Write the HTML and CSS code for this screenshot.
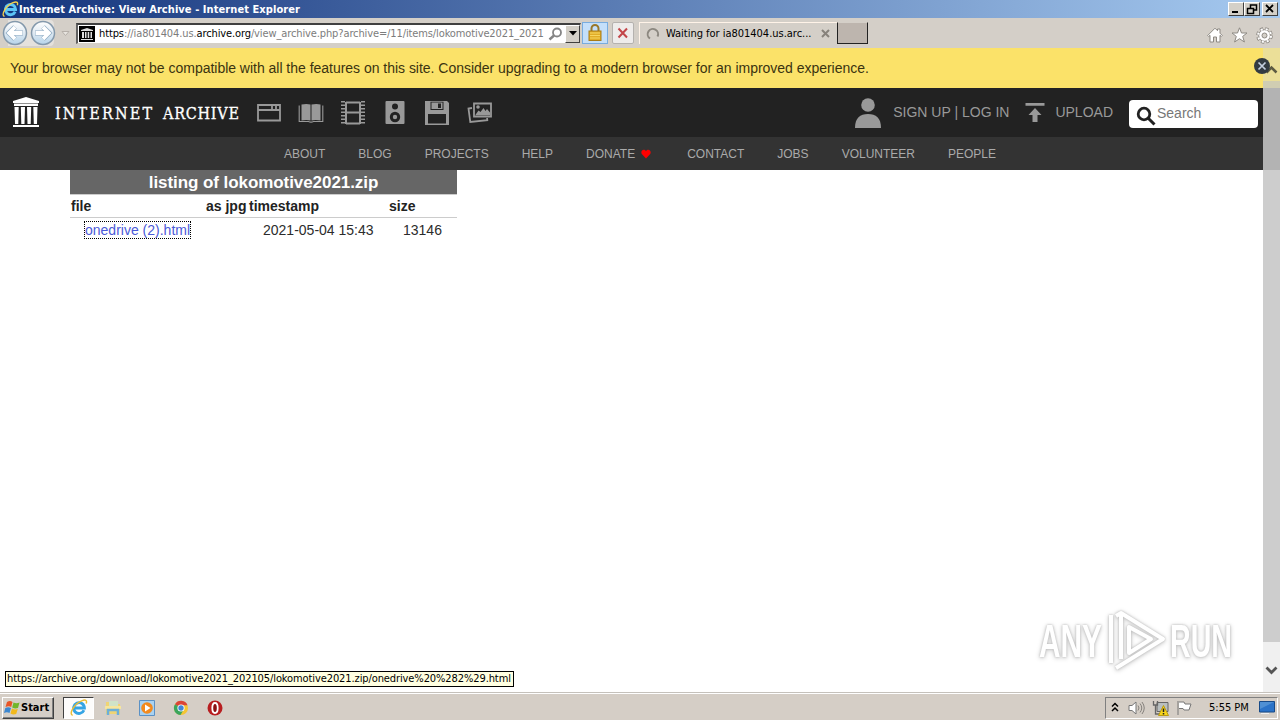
FILE: index.html
```html
<!DOCTYPE html>
<html lang="en">
  <head>
    <meta charset="UTF-8" />
    <title>Internet Archive: View Archive</title>
    <link rel="stylesheet" href="styles.css">
  </head>
  <body>
    <div class="titlebar">
      <svg class="ie" width="17" height="17" viewBox="0 0 20 20">
        <path d="M15.5 12.5A6 6 0 1 1 16 10H5" fill="none" stroke="#5cc4f5" stroke-width="3.4" />
        <path d="M3 18C-2 17 5 5 13 2c5-2 6 0 5 3" fill="none" stroke="#f5cf4c" stroke-width="1.6" />
      </svg>
      <span class="title">Internet Archive: View Archive - Internet Explorer</span>
      <div class="win-btns">
        <span class="win-btn"><svg width="15" height="12"><path d="M3 9h6" stroke="#000" stroke-width="2" /></svg></span>
        <span class="win-btn"><svg width="15" height="12"><path d="M5.500 5V2h6v5H9M5 2h7M2.500 5.500h6v5h-6zM2 5.500h7" fill="none" stroke="#000" stroke-width="1.500" /></svg></span>
        <span class="win-btn close"><svg width="14" height="12"><path d="M3 2l7 7M10 2l-7 7" stroke="#000" stroke-width="1.800" /></svg></span>
      </div>
    </div>

    <div class="toolbar">
      <svg class="arrows" width="75" height="30" viewBox="0 0 75 30">
        <defs>
          <linearGradient id="orb" x2="0" y2="1">
            <stop offset="0" stop-color="#fff" />
            <stop offset=".5" stop-color="#dfe9f2" />
            <stop offset="1" stop-color="#b5d4ea" />
          </linearGradient>
        </defs>
        <path d="M8 2h42q4 0 4 5v16q0 5-4 5H8z" fill="#e4e1dd" />
        <circle cx="15" cy="15" r="11.500" fill="url(#orb)" stroke="#8499ac" stroke-width="1.500" />
        <circle cx="43" cy="15" r="11.500" fill="url(#orb)" stroke="#8499ac" stroke-width="1.500" />
        <path d="M23 15H9M15 9l-6 6 6 6M35 15h14M43 9l6 6-6 6" fill="none" stroke="#8daac2" stroke-width="5" />
        <path d="M22.500 15H9.500M15 9.200L9.200 15l5.800 5.800M35.500 15h13M43 9.200l5.800 5.800-5.800 5.800" fill="none" stroke="#fff" stroke-width="3.800" />
        <path d="M62 13.500h7l-3.500 4z" fill="#e8e5e0" stroke="#b6b0aa" />
      </svg>
      <div class="address">
        <svg class="favicon" width="16" height="16" viewBox="0 0 16 16">
          <path d="M0 0h16v16H0z" fill="#000" />
          <path d="M2 4l6-2 6 2v1H2zM2 13h12v1H2zM3 6h2v6H3zM6 6h1.500v6H6zM8.700 6h1.500v6H8.700zM11.500 6H13v6h-1.500z" fill="#ddd" />
        </svg>
        <span class="url"><b>https</b>://ia801404.us.<b>archive.org</b>/view_archive.php?archive=/11/items/lokomotive2021_2021</span>
        <svg class="find" width="15" height="14" viewBox="0 0 15 14">
          <circle cx="9" cy="5.500" r="4" fill="#fff" stroke="#858585" stroke-width="1.800" />
          <path d="M6 8.500L1.500 12.500" stroke="#858585" stroke-width="2.500" />
        </svg>
        <span class="drop"><svg width="8" height="5"><path d="M0 0h8L4 4.500z" fill="#000" /></svg></span>
      </div>
      <div class="lock">
        <svg width="16" height="18" viewBox="0 0 16 18">
          <path d="M4.500 8V4.500a3.500 3.500 0 0 1 7 0V8" fill="none" stroke="#99772a" stroke-width="2" />
          <rect x="2" y="7" width="12" height="9.500" fill="#e1ac27" stroke="#a77b17" />
          <path d="M3 9h10M3 11.500h10M3 14h10" stroke="#f6d560" />
        </svg>
      </div>
      <div class="stop">
        <svg width="12" height="12"><path d="M1.500 1.500l8.500 9M10 1.500l-8.500 9" stroke="#c3464a" stroke-width="2" /></svg>
      </div>
      <div class="tab">
        <svg width="14" height="14" viewBox="0 0 14 14">
          <path d="M4 11.500A5.200 5.200 0 1 1 11.500 9.500" fill="none" stroke="#8c8880" stroke-width="2" />
        </svg>
        <span class="tab-title">Waiting for ia801404.us.arc...</span>
        <svg width="9" height="9"><path d="M1 1l7 7M8 1L1 8" stroke="#87827b" stroke-width="2" /></svg>
      </div>
      <div class="new-tab"></div>
      <div class="tools">
        <svg width="16" height="16" viewBox="0 0 16 16"><path d="M.7 8.500L8 1.200l2.500 2.500V2H13v4.200l2.300 2.300-1 1L13 8.300V15H9.500v-5h-3v5H3V8.300l-1.300 1.200z" fill="#fff" stroke="#8d8983" /></svg>
        <svg width="17" height="16" viewBox="0 0 17 16"><path d="M8.500.8l2 5.200H16l-4.300 3.400 1.700 5.600-4.900-3.300L3.600 15l1.700-5.600L1 6h5.500z" fill="#fff" stroke="#8d8983" /></svg>
        <svg width="17" height="17" viewBox="0 0 17 17">
          <circle cx="8.500" cy="8.500" r="6.500" fill="none" stroke="#8d8983" stroke-width="3.600" stroke-dasharray="3 2.100" />
          <circle cx="8.500" cy="8.500" r="5.800" fill="#fff" stroke="#8d8983" />
          <circle cx="8.500" cy="8.500" r="6.500" fill="none" stroke="#fff" stroke-width="2" stroke-dasharray="2 3.100" stroke-dashoffset="-.5" />
          <circle cx="8.500" cy="8.500" r="2.500" fill="#d4d0c8" stroke="#8d8983" />
        </svg>
      </div>
    </div>

    <div class="viewport">
      <div class="banner">Your browser may not be compatible with all the features on this site. Consider upgrading to a modern browser for an improved experience.
        <svg class="dismiss" width="18" height="18" viewBox="0 0 18 18">
          <circle cx="9" cy="9" r="8" fill="#333b42" />
          <path d="M5.500 5.500l7 7M12.500 5.500l-7 7" stroke="#c4cfdf" stroke-width="1.700" />
        </svg>
      </div>

      <div class="topnav">
        <svg class="temple" width="28" height="32" viewBox="0 0 28 32">
          <path d="M14 0l13 4v2H1V4zM2 6.500h24V9H2zM1 28h26v2H1zM2.500 10h4.200l-.4 17H3zM8.800 10H13l-.5 17H9.300zM15 10h4.200l-.5 17h-3.200zM21.300 10h4.200l-.5 17h-3.200z" fill="#fff" />
        </svg>
        <svg class="wordmark" width="186" height="22">
          <text x="0" y="17" textLength="97">INTERNET</text>
          <text x="108" y="17" textLength="76">ARCHIVE</text>
        </svg>
        <div class="media">
          <svg width="26" height="26" viewBox="0 0 26 26"><path d="M2 5h22v15.500H2zM2 10h22M16 5v4M20 5v4" fill="none" stroke="#999" stroke-width="1.800" /></svg>
          <svg width="26" height="26" viewBox="0 0 26 26"><path d="M3.500 4.500q5-1 9 0v16q-4-1.200-9 0zM13.500 4.500q5-1 9 0v16q-5-1.200-9 0z" fill="#999" /><path d="M1.200 5.500v16h9.300q2.500 1.200 5 0h9.300v-16" fill="none" stroke="#999" stroke-width="1.100" /></svg>
          <svg width="26" height="26" viewBox="0 0 26 26"><path d="M6 2v22M20 2v22M6 2.500h14M6 12.500h14M6 23.500h14" stroke="#999" stroke-width="2" /><path d="M3 1v24M23 1v24" stroke="#999" stroke-width="4" stroke-dasharray="1.500 2" /></svg>
          <svg width="26" height="26" viewBox="0 0 26 26"><rect x="3.500" y="1" width="19" height="23" rx="1" fill="#999" /><circle cx="13" cy="6.500" r="3" fill="#222" /><circle cx="13" cy="17" r="5.200" fill="#222" /><circle cx="13" cy="17" r="2.200" fill="#999" /></svg>
          <svg width="26" height="26" viewBox="0 0 26 26"><path d="M1 1h22l2 2v22H1z" fill="#999" /><path d="M6.500 1.800h13V10h-13zM4 14h18v9.500H4z" fill="#222" /><path d="M7.500 2.500h11v6.500h-11z" fill="#999" /><path d="M14 3.500h3v4.500h-3z" fill="#222" /></svg>
          <svg width="26" height="26" viewBox="0 0 26 26"><path d="M8 3.500h17v13.200H8z" fill="none" stroke="#999" stroke-width="1.800" /><path d="M6 8l-3.500.6L4.300 22l17-1.800-.2-2.200" fill="none" stroke="#999" stroke-width="1.800" /><path d="M9 15.500l3.500-5 2 1.500 3-4 2 3 1.500-2 3 3.500v3z" fill="#999" /><circle cx="12" cy="7" r="1.800" fill="#999" /></svg>
        </div>
        <svg class="user" width="28" height="32" viewBox="0 0 28 32"><circle cx="14" cy="8" r="6.800" fill="#999" /><path d="M1 31C1 21 6 17 14 17s13 4 13 14z" fill="#999" /></svg>
        <span class="login">SIGN UP | LOG IN</span>
        <svg class="up" width="20" height="20" viewBox="0 0 20 20"><path d="M.5 0h19v2.700H.5zM10 5l6.500 7H12.500v7h-5v-7h-4z" fill="#999" /></svg>
        <span class="upload">UPLOAD</span>
        <div class="search">
          <svg width="20" height="20" viewBox="0 0 20 20"><circle cx="8" cy="8" r="5.800" fill="none" stroke="#222" stroke-width="2.800" /><path d="M12 12l6.500 6.500" stroke="#222" stroke-width="3" /></svg>
          <span>Search</span>
        </div>
      </div>

      <div class="subnav">
        <span>ABOUT</span>
        <span>BLOG</span>
        <span>PROJECTS</span>
        <span>HELP</span>
        <span class="donate">DONATE <svg width="10" height="10" viewBox="0 0 10 10"><path d="M5 9.500L.8 5C-1 2 3-1 5 2.300 7-1 11 2 9.200 5z" fill="#f00" /></svg></span>
        <span>CONTACT</span>
        <span>JOBS</span>
        <span>VOLUNTEER</span>
        <span>PEOPLE</span>
      </div>

      <table class="archive">
        <caption>listing of lokomotive2021.zip</caption>
        <tr><th class="c-file">file</th><th class="c-jpg">as jpg</th><th class="c-time">timestamp</th><th class="c-size">size</th></tr>
        <tr><td><a href="#">onedrive (2).html</a></td><td></td><td>2021-05-04 15:43</td><td>13146</td></tr>
      </table>

      <div class="scrollbar">
        <svg class="s-up" width="17" height="33" viewBox="0 0 17 33"><path d="M3.500 24.500l5-5 5 5" fill="none" stroke="#5d5b42" stroke-width="2.500" /></svg>
        <div class="thumb"></div>
        <svg class="s-down" width="17" height="50" viewBox="0 0 17 50"><path d="M3.500 25.500l5 5 5-5" fill="none" stroke="#555" stroke-width="2.800" /></svg>
      </div>
      <div class="status">https://archive.org/download/lokomotive2021_202105/lokomotive2021.zip/onedrive%20%282%29.html</div>
      <svg class="watermark" width="224" height="80" viewBox="0 0 224 80">
        <g class="wm-text">
          <text x="8" y="57" textLength="63" lengthAdjust="spacingAndGlyphs">ANY</text>
          <text x="139" y="57" textLength="62" lengthAdjust="spacingAndGlyphs">RUN</text>
        </g>
        <path d="M80 15v48M90 59V13l42 26-42 26-5 3M98 27v26l22-14zM90 13l-5 3" fill="none" stroke="#fff" stroke-width="4" stroke-linejoin="round" />
      </svg>
    </div>

    <div class="taskbar">
      <div class="start">
        <svg width="17" height="16" viewBox="0 0 17 16">
          <path d="M3 2q3-2 5.500 0L7.200 7Q5 5.500 1.500 7z" fill="#e85526" />
          <path d="M9.500 2.500q3 1.500 6 0L14 8q-3 1-5.800-.5z" fill="#72b62b" />
          <path d="M1.300 8q3-1.500 5.700 0l-1.500 5Q3 11.500 0 13z" fill="#3c87d0" />
          <path d="M8 8.500q3 1.500 5.800.5l-1.600 5q-3 1.200-5.700-.5z" fill="#f2b91c" />
        </svg>
        <span>Start</span>
      </div>
      <div class="task-active">
        <svg width="18" height="18" viewBox="0 0 20 20">
          <path d="M15.500 12.500A6 6 0 1 1 16 10H5" fill="none" stroke="#35a4e4" stroke-width="3.200" />
          <path d="M3 18C-2 17 5 5 13 2c5-2 6 0 5 3" fill="none" stroke="#ebbd35" stroke-width="1.600" />
        </svg>
      </div>
      <div class="quick">
        <svg width="18" height="18" viewBox="0 0 18 18"><path d="M2 3h6l1 2h7v10H2z" fill="#efd474" /><path d="M5 2h9v5H5z" fill="#cfe3c8" /><path d="M1 7h16v3H1z" fill="#f7e69c" /><path d="M4 16v-5h10v5" fill="none" stroke="#6cafd9" stroke-width="2.500" /></svg>
        <svg width="18" height="18" viewBox="0 0 18 18"><path d="M1.500 1.500h15v15h-15z" fill="#a9d2f1" stroke="#5b91c5" /><circle cx="9" cy="9" r="5.800" fill="#f38a1d" /><path d="M7 5.500l5.500 3.500L7 12.500z" fill="#fff" /></svg>
        <svg width="18" height="18" viewBox="0 0 18 18"><circle cx="9" cy="9" r="7" fill="#f4c534" /><path d="M9 9L3 5.200a7 7 0 0 1 12.500 1H9z" fill="#db4437" /><path d="M9 9l-6-3.800A7 7 0 0 0 8.500 16l3-5z" fill="#3ba55c" /><circle cx="9" cy="9" r="3.600" fill="#fff" /><circle cx="9" cy="9" r="2.700" fill="#4285d6" /></svg>
        <svg width="18" height="18" viewBox="0 0 18 18"><circle cx="9" cy="9" r="7.500" fill="#b81e20" /><ellipse cx="9" cy="9" rx="2.700" ry="5" fill="#8b1012" stroke="#fff" stroke-width="1.800" /></svg>
      </div>
      <div class="tray">
        <svg width="8" height="12" viewBox="0 0 8 12"><path d="M1 4.500l3-3 3 3M1 9l3-3 3 3" fill="none" stroke="#000" stroke-width="1.500" /></svg>
        <svg class="t-sound" width="17" height="16" viewBox="0 0 17 16"><path d="M1 5.500h3L8 2v12l-4-3.500H1z" fill="#fff" stroke="#777" /><path d="M10 5.500q2 2.500 0 5M12 3.500q3.500 4.500 0 9M14 2q4.500 6 0 12" fill="none" stroke="#85817c" /></svg>
        <svg class="t-net" width="17" height="16" viewBox="0 0 17 16"><path d="M5 2.500h11v9H5z" fill="#b9bfc0" stroke="#666" /><path d="M1.500 1v4h4V1M3.500 5v9h6" fill="none" stroke="#666" stroke-width="1.300" /><path d="M11.500 5.500l5 10h-10z" fill="#f8d51b" stroke="#b99a13" /><path d="M11.500 8.500v3.500M11.500 13v1.500" stroke="#222" stroke-width="1.500" /></svg>
        <svg class="t-flag" width="17" height="16" viewBox="0 0 17 16"><path d="M2 1v14M3 2h5l1 2h6l-2 6H8L7 8.500H3" fill="#fff" stroke="#777" /></svg>
        <span class="clock">5:55 PM</span>
        <svg class="t-desk" width="16" height="14" viewBox="0 0 16 14"><path d="M.5.500h15V11H.5z" fill="#2b73c8" stroke="#174a88" /><path d="M1 1h14L1 8z" fill="#4f90d4" /><path d="M2 12.500h8" stroke="#f0f0f0" /></svg>
      </div>
    </div>
  </body>
</html>
```
FILE: styles.css
```css
* {
  box-sizing: border-box;
}
body {
  margin: 0;
  width: 1280px;
  height: 720px;
  overflow: hidden;
  display: flex;
  flex-direction: column;
  background: #fff;
  font-family: "Liberation Sans", Arial, sans-serif;
}
svg {
  display: block;
  flex: none;
}
.titlebar,
.toolbar,
.status,
.taskbar {
  font-family: "DejaVu Sans Condensed", "DejaVu Sans", sans-serif;
  font-stretch: condensed;
  font-size: 11px;
  color: #000;
  white-space: nowrap;
}

/* window frame */
.titlebar {
  height: 18px;
  flex: none;
  display: flex;
  align-items: center;
  padding: 0 2px;
  background: linear-gradient(90deg, #14347c, #a6caf0);
}
.title {
  color: #fff;
  font-weight: bold;
  letter-spacing: 0.07px;
}
.win-btns {
  margin-left: auto;
  display: flex;
}
.win-btn {
  width: 16px;
  height: 14px;
  background: #d4d0c8;
  border: 1px solid;
  border-color: #fff #404040 #404040 #fff;
}
.close {
  margin-left: 2px;
}
.toolbar {
  height: 30px;
  flex: none;
  display: flex;
  align-items: center;
  background: #d4cfc8;
}
.address {
  width: 505px;
  height: 21px;
  margin-left: 1px;
  display: flex;
  align-items: center;
  background: #fff;
  border: 1px solid #d4d0c8;
  border-top: 2px solid #404040;
  border-left: 2px solid #606060;
}
.favicon {
  margin: 0 4px 0 1px;
}
.url {
  width: 449px;
  flex: none;
  letter-spacing: -0.115px;
  color: #7c7c7c;
}
.url b {
  font-weight: normal;
  color: #000;
}
.drop {
  width: 15px;
  height: 18px;
  margin-left: auto;
  display: flex;
  align-items: center;
  justify-content: center;
  background: #d4d0c8;
  border: 1px solid;
  border-color: #fff #404040 #404040 #fff;
}
.lock,
.stop {
  height: 22px;
  display: flex;
  align-items: center;
  justify-content: center;
}
.lock {
  width: 26px;
  margin-left: 1px;
  background: #c4dffa;
  border: 1px solid #78acdf;
}
.stop {
  width: 22px;
  margin-left: 4px;
  background: #eeeceb;
  border: 1px solid #b5b2af;
  border-radius: 2px;
}
.tab {
  width: 198px;
  height: 22px;
  margin-left: 5px;
  padding: 0 7px 0 6px;
  display: flex;
  align-items: center;
  border-top: 1px solid #fff3e8;
  border-left: 1px solid #fff3e8;
}
.tab-title {
  width: 155px;
  margin-left: 6px;
  letter-spacing: -0.02px;
}
.new-tab {
  width: 31px;
  height: 22px;
  background: #bdb5ae;
  border: 1px solid #222;
  border-top-color: #d4cfc8;
}
.tools {
  margin: 4px 7px 0 auto;
  display: flex;
  gap: 8px;
}

/* page */
.viewport {
  position: relative;
  flex: 1;
}
.banner {
  position: relative;
  height: 40px;
  padding: 0 10px;
  line-height: 40px;
  font-size: 14px;
  letter-spacing: -0.021px;
  color: #3a3310;
  background: #fbe269;
}
.dismiss {
  position: absolute;
  top: 9px;
  right: 9px;
  z-index: 1;
}
.topnav {
  height: 49px;
  padding: 0 22px 0 12px;
  display: flex;
  align-items: center;
  background: #222;
  color: #999;
  font-size: 14px;
}
.wordmark {
  margin-left: 15px;
}
.wordmark text {
  font-family: "DejaVu Serif Condensed", "Liberation Serif", serif;
  font-size: 16px;
  fill: #fff;
  stroke: #fff;
  stroke-width: 0.3px;
}
.media {
  margin-left: 15px;
  display: flex;
  gap: 16px;
}
.user {
  margin-left: auto;
}
.login {
  margin: 0 0 2px 11px;
}
.up {
  margin-left: 16px;
}
.upload {
  margin: 0 0 2px 10px;
}
.search {
  width: 129px;
  height: 28px;
  margin: 3px 0 0 16px;
  padding-left: 7px;
  display: flex;
  align-items: center;
  gap: 1px;
  background: #fff;
  border-radius: 4px;
  color: #777;
}
.search svg {
  margin-top: 3px;
}
.search span {
  margin-bottom: 2px;
}
.subnav {
  height: 33px;
  display: flex;
  align-items: center;
  justify-content: center;
  gap: 33px;
  background: #333;
  color: #aaa;
  font-size: 12px;
}
.donate {
  display: flex;
  align-items: center;
  gap: 6px;
  margin-right: 3px;
}
.archive {
  width: 387px;
  margin-left: 70px;
  table-layout: fixed;
  border-collapse: collapse;
  font-size: 14px;
  color: #2c2c2c;
}
.archive caption {
  height: 25px;
  line-height: 25px;
  font-size: 17px;
  font-weight: bold;
  letter-spacing: -0.07px;
  color: #fff;
  background: #666;
  border-bottom: 1px solid #ccc;
}
.archive th {
  height: 22px;
  padding: 0 1px;
  text-align: left;
  white-space: nowrap;
  color: #222;
  border-bottom: 1px solid #ccc;
}
.archive td {
  height: 25px;
  padding: 0 14px 0 15px;
  white-space: nowrap;
}
.c-file {
  width: 135px;
}
.c-jpg {
  width: 43px;
}
.c-time {
  width: 140px;
}
.archive a {
  color: #4b5ad8;
  text-decoration: none;
  outline: 1px dotted #000;
}
.scrollbar {
  position: absolute;
  top: 0;
  right: 0;
  bottom: 0;
  width: 17px;
  display: flex;
  flex-direction: column;
}
.s-up {
  background: rgba(220, 220, 200, 0.5);
}
.thumb {
  flex: 1;
  background: linear-gradient(#d0cdb2 7px, #b3b3b3 7px, #b3b3b3 89px, #cdcdcd 89px);
}
.s-down {
  background: #f0f0f0;
}
.status {
  position: absolute;
  left: 5px;
  bottom: 5px;
  width: 509px;
  height: 16px;
  padding-left: 1px;
  line-height: 14px;
  letter-spacing: -0.1px;
  background: #ffffe1;
  border: 1px solid #000;
}
.watermark {
  position: absolute;
  right: 25px;
  bottom: 12px;
  filter: drop-shadow(0 0 1px #bbb) drop-shadow(0 1px 2px #ccc);
}
.wm-text {
  fill: #fff;
  font-size: 46px;
  font-weight: bold;
}

/* taskbar */
.taskbar {
  height: 28px;
  flex: none;
  display: flex;
  align-items: center;
  padding: 2px 2px 0;
  background: #d5cec6;
  border-top: 1px solid #c5c1bb;
  box-shadow: inset 0 1px #fff;
}
.start {
  width: 52px;
  height: 22px;
  display: flex;
  align-items: center;
  gap: 0;
  border: 1px solid;
  border-color: #fff #404040 #404040 #fff;
  box-shadow: inset -1px -1px #808080;
  font-weight: bold;
}
.start svg {
  margin-left: 1px;
}
.task-active {
  width: 31px;
  height: 22px;
  margin-left: 9px;
  display: flex;
  align-items: center;
  justify-content: center;
  background: #fdfcfb;
  border: 1px solid;
  border-color: #404040 #fff #fff #404040;
}
.quick {
  margin-left: 10px;
  display: flex;
  gap: 16px;
}
.tray {
  width: 173px;
  height: 22px;
  margin-left: auto;
  padding-left: 5px;
  display: flex;
  align-items: center;
  border: 1px solid;
  border-color: #808080 #fff #fff #808080;
}
.t-sound {
  margin-left: 9px;
}
.t-net,
.t-flag {
  margin-left: 7px;
}
.clock {
  width: 42px;
  margin-left: 16px;
}
.t-desk {
  margin-left: 8px;
}
```
